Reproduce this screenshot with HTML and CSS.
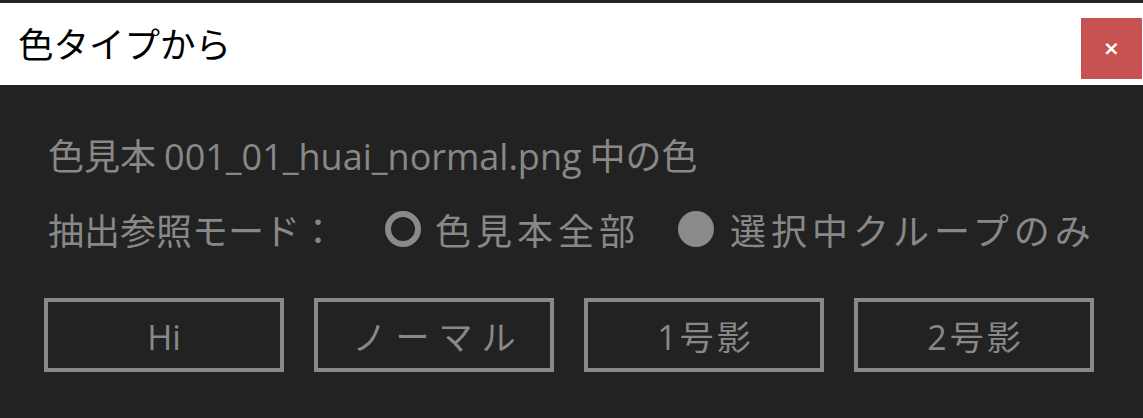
FILE: index.html
```html
<!DOCTYPE html>
<html lang="ja">
<head>
<meta charset="utf-8">
<link rel="stylesheet" href="styles.css">
</head>
<body>
<div class="strip"></div>
<header class="titlebar">
  <h1 class="title">色タイプから</h1>
  <button class="close" type="button">×</button>
</header>
<main class="content">
  <p class="line source">色見本 <span class="latin">001_01_huai_normal.png</span> 中の色</p>
  <div class="line mode">
    <span class="label">抽出参照モード：</span>
    <label class="radio"><span class="dot ring"></span>色見本全部</label>
    <label class="radio wide"><span class="dot filled"></span>選択中クループのみ</label>
  </div>
  <div class="buttons">
    <button class="btn plain" type="button"><span class="latin">Hi</span></button>
    <button class="btn kana" type="button">ノーマル</button>
    <button class="btn" type="button"><span class="latin">1</span>号影</button>
    <button class="btn" type="button"><span class="latin">2</span>号影</button>
  </div>
</main>
</body>
</html>
```

FILE: styles.css
```css
html, body {
  margin: 0;
  padding: 0;
}
body {
  background: #222222;
  width: 1143px;
  height: 418px;
  overflow: hidden;
  font-family: "Noto Sans CJK JP", "Noto Sans", sans-serif;
}
.strip {
  height: 3px;
  background: #262626;
}
.titlebar {
  height: 82px;
  background: #ffffff;
  display: flex;
  align-items: flex-start;
  padding-left: 18px;
  padding-right: 1px;
}
.title {
  margin: 0;
  margin-top: 17px;
  font-size: 35.5px;
  font-weight: 400;
  line-height: 46px;
  color: #000;
}
.close {
  margin-left: auto;
  margin-top: 15px;
  width: 61px;
  height: 61px;
  border: 0;
  padding: 0;
  background: #c75252;
  color: #fff;
  font-family: "DejaVu Sans", sans-serif;
  font-size: 20px;
  font-weight: 700;
  line-height: 61px;
}
.content {
  padding: 0 0 0 48px;
  color: #888888;
}
.line {
  margin: 0;
  font-size: 36px;
  line-height: 50px;
}
.source {
  margin-top: 44px;
}
.latin {
  font-family: "Open Sans", sans-serif;
}
.mode {
  margin-top: 22px;
  display: flex;
  align-items: center;
}
.label {
  width: 337px;
}
.radio {
  display: flex;
  align-items: center;
  gap: 14px;
  margin-right: 38px;
  letter-spacing: 5px;
}
.radio.wide {
  gap: 16px;
}
.dot {
  width: 36px;
  height: 36px;
  border-radius: 50%;
  box-sizing: border-box;
  flex: none;
}
.ring {
  border: 6px solid #8a8a8a;
}
.filled {
  background: #8a8a8a;
}
.buttons {
  margin-top: 44px;
  width: 1050px;
  margin-left: -4px;
  display: flex;
  justify-content: space-between;
}
.btn {
  width: 240px;
  height: 74px;
  box-sizing: border-box;
  border: 4px solid #888888;
  background: #222222;
  color: #888888;
  font-family: "Noto Sans CJK JP", sans-serif;
  font-size: 34px;
  letter-spacing: 3px;
  padding: 0 0 0 3px;
}
.btn.plain {
  letter-spacing: 0;
  padding-left: 0;
}
.btn.kana {
  letter-spacing: 9px;
  padding-left: 9px;
}
```
